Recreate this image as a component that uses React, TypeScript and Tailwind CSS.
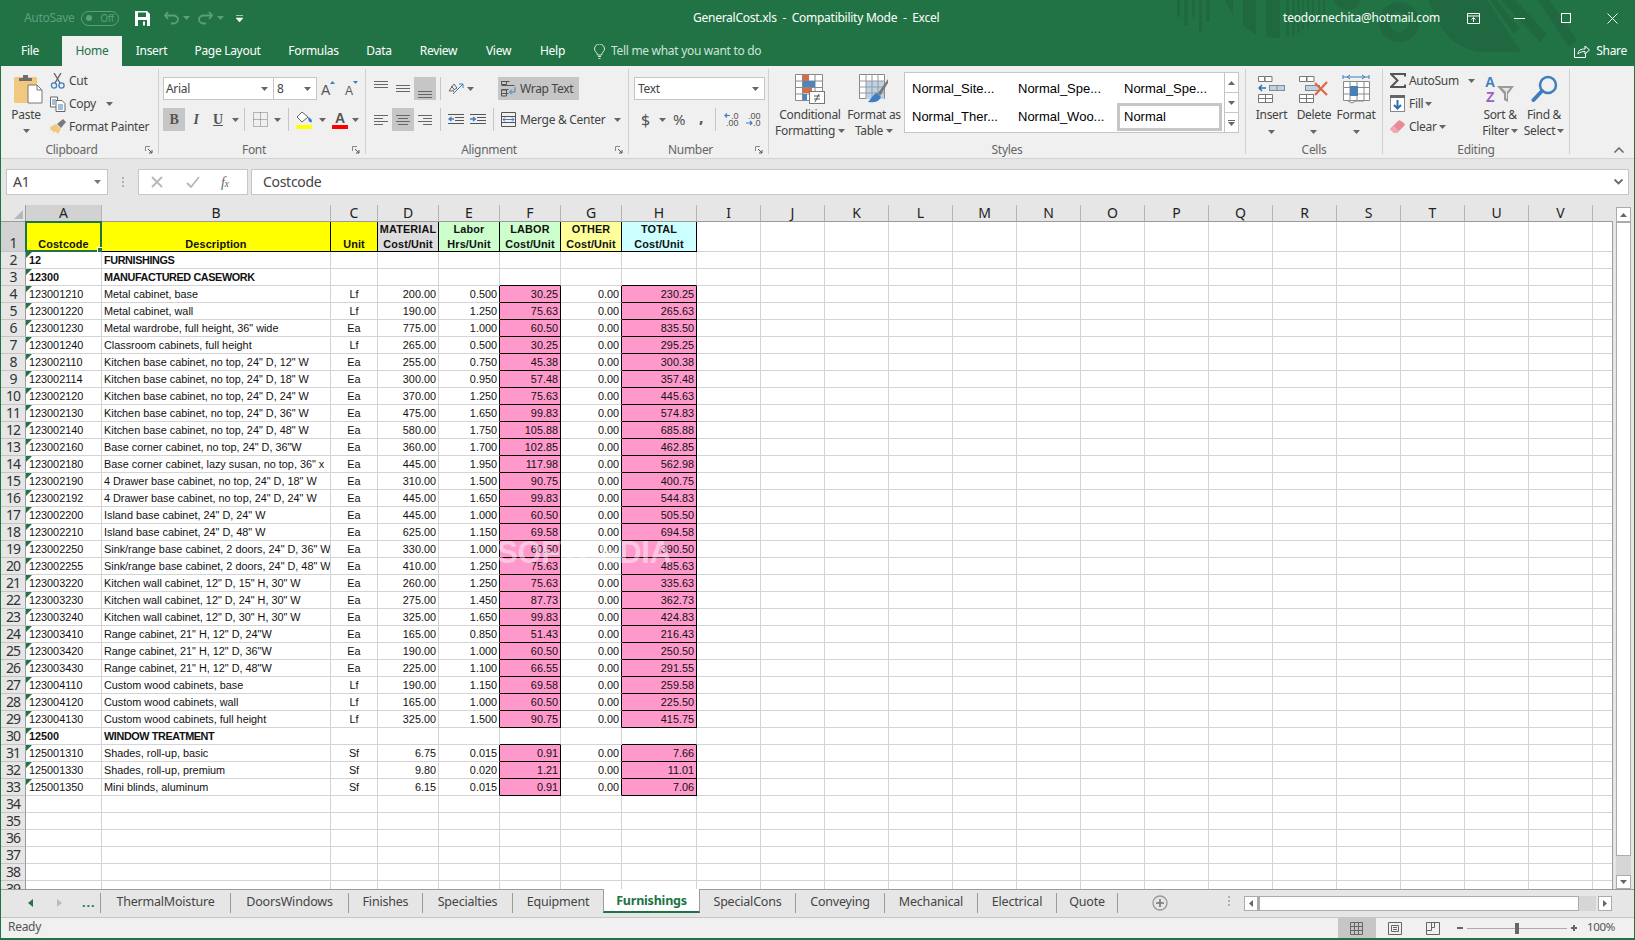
import React from 'react';

type RowD = [string, string, string?, string?, string?, string?, string?, string?];
const kb = 'Kitchen base cabinet, no top, 24" D, ';
const rows: RowD[] = [
  ['12', 'FURNISHINGS'],
  ['12300', 'MANUFACTURED CASEWORK'],
  ['123001210', 'Metal cabinet, base', 'Lf', '200.00', '0.500', '30.25', '0.00', '230.25'],
  ['123001220', 'Metal cabinet, wall', 'Lf', '190.00', '1.250', '75.63', '0.00', '265.63'],
  ['123001230', 'Metal wardrobe, full height, 36" wide', 'Ea', '775.00', '1.000', '60.50', '0.00', '835.50'],
  ['123001240', 'Classroom cabinets, full height', 'Lf', '265.00', '0.500', '30.25', '0.00', '295.25'],
  ['123002110', kb + '12" W', 'Ea', '255.00', '0.750', '45.38', '0.00', '300.38'],
  ['123002114', kb + '18" W', 'Ea', '300.00', '0.950', '57.48', '0.00', '357.48'],
  ['123002120', kb + '24" W', 'Ea', '370.00', '1.250', '75.63', '0.00', '445.63'],
  ['123002130', kb + '36" W', 'Ea', '475.00', '1.650', '99.83', '0.00', '574.83'],
  ['123002140', kb + '48" W', 'Ea', '580.00', '1.750', '105.88', '0.00', '685.88'],
  ['123002160', 'Base corner cabinet, no top, 24" D, 36"W', 'Ea', '360.00', '1.700', '102.85', '0.00', '462.85'],
  ['123002180', 'Base corner cabinet, lazy susan, no top, 36" x', 'Ea', '445.00', '1.950', '117.98', '0.00', '562.98'],
  ['123002190', '4 Drawer base cabinet, no top, 24" D, 18" W', 'Ea', '310.00', '1.500', '90.75', '0.00', '400.75'],
  ['123002192', '4 Drawer base cabinet, no top, 24" D, 24" W', 'Ea', '445.00', '1.650', '99.83', '0.00', '544.83'],
  ['123002200', 'Island base cabinet, 24" D, 24" W', 'Ea', '445.00', '1.000', '60.50', '0.00', '505.50'],
  ['123002210', 'Island base cabinet, 24" D, 48" W', 'Ea', '625.00', '1.150', '69.58', '0.00', '694.58'],
  ['123002250', 'Sink/range base cabinet, 2 doors, 24" D, 36" W', 'Ea', '330.00', '1.000', '60.50', '0.00', '390.50'],
  ['123002255', 'Sink/range base cabinet, 2 doors, 24" D, 48" W', 'Ea', '410.00', '1.250', '75.63', '0.00', '485.63'],
  ['123003220', 'Kitchen wall cabinet, 12" D, 15" H, 30" W', 'Ea', '260.00', '1.250', '75.63', '0.00', '335.63'],
  ['123003230', 'Kitchen wall cabinet, 12" D, 24" H, 30" W', 'Ea', '275.00', '1.450', '87.73', '0.00', '362.73'],
  ['123003240', 'Kitchen wall cabinet, 12" D, 30" H, 30" W', 'Ea', '325.00', '1.650', '99.83', '0.00', '424.83'],
  ['123003410', 'Range cabinet, 21" H, 12" D, 24"W', 'Ea', '165.00', '0.850', '51.43', '0.00', '216.43'],
  ['123003420', 'Range cabinet, 21" H, 12" D, 36"W', 'Ea', '190.00', '1.000', '60.50', '0.00', '250.50'],
  ['123003430', 'Range cabinet, 21" H, 12" D, 48"W', 'Ea', '225.00', '1.100', '66.55', '0.00', '291.55'],
  ['123004110', 'Custom wood cabinets, base', 'Lf', '190.00', '1.150', '69.58', '0.00', '259.58'],
  ['123004120', 'Custom wood cabinets, wall', 'Lf', '165.00', '1.000', '60.50', '0.00', '225.50'],
  ['123004130', 'Custom wood cabinets, full height', 'Lf', '325.00', '1.500', '90.75', '0.00', '415.75'],
  ['12500', 'WINDOW TREATMENT'],
  ['125001310', 'Shades, roll-up, basic', 'Sf', '6.75', '0.015', '0.91', '0.00', '7.66'],
  ['125001330', 'Shades, roll-up, premium', 'Sf', '9.80', '0.020', '1.21', '0.00', '11.01'],
  ['125001350', 'Mini blinds, aluminum', 'Sf', '6.15', '0.015', '0.91', '0.00', '7.06'],
];

const headW = 'w-[25px]';
const mainW = ['w-[76px]', 'w-[229px]', 'w-[47px]', 'w-[61px]', 'w-[61px]', 'w-[61px]', 'w-[61px]', 'w-[75px]'];
const extraLetters = ['I', 'J', 'K', 'L', 'M', 'N', 'O', 'P', 'Q', 'R', 'S', 'T', 'U', 'V'];

const Caret = ({ c = '#666' }: { c?: string }) => (
  <svg width="7" height="4" viewBox="0 0 7 4" className="shrink-0"><path d="M0 0h7L3.5 4z" fill={c} /></svg>
);

const Launcher = () => (
  <svg width="8" height="8" viewBox="0 0 8 8" className="absolute bottom-0 right-[5px]">
    <path d="M.5 5V.5H5" fill="none" stroke="#888" />
    <path d="M3 3l4 4M7 4v3H4" fill="none" stroke="#555" />
  </svg>
);

const Group = ({ w, label, launch, children }: { w: string; label: string; launch?: boolean; children: React.ReactNode }) => (
  <div className={`relative flex h-[85px] shrink-0 flex-col border-r border-[#d0d0d0] ${w}`}>
    <div className="flex h-[72px] shrink-0">{children}</div>
    <div className={`pt-[2px] text-center text-[12px] leading-[13px] text-[#666] ${launch ? 'pr-[16px]' : ''}`}>{label}</div>
    {launch && <Launcher />}
  </div>
);

const Lines = ({ rows: r }: { rows: [number, number, number][] }) => (
  <svg width="15" height="22" viewBox="0 0 15 22">
    {r.map(([y, x, l], i) => <rect key={i} x={x} y={y} width={l} height="1" fill="#666" />)}
  </svg>
);

const Sep = () => <div className="h-[23px] w-px shrink-0 bg-[#c6c6c6]" />;

function PasteIcon() {
  return (
    <svg width="30" height="30" viewBox="0 0 30 30">
      <rect x="1" y="3" width="23" height="26" rx="1" fill="#f0c97e" />
      <path d="M6 4h4V1h5v3h4v3H6z" fill="#6e6e6e" />
      <path d="M15 11h9l5 5v13H15z" fill="#fff" stroke="#777" />
      <path d="M24 11v5h5" fill="none" stroke="#777" />
    </svg>
  );
}
const CutIcon = () => (
  <svg width="16" height="16" viewBox="0 0 16 16">
    <path d="M4 0l6 10M11 0L5 10" stroke="#666" strokeWidth="1.4" fill="none" />
    <circle cx="4" cy="12.5" r="2.6" fill="none" stroke="#3f7fbf" strokeWidth="1.3" />
    <circle cx="11.5" cy="12.5" r="2.6" fill="none" stroke="#3f7fbf" strokeWidth="1.3" />
  </svg>
);
const CopyIcon = () => (
  <svg width="16" height="16" viewBox="0 0 16 16">
    <path d="M.5 1h7v10h-7z" fill="#fff" stroke="#666" />
    <path d="M6 4.500h6l3 3v8H6z" fill="#fff" stroke="#666" />
    <path d="M2 4h4M2 6h3M2 8h3" stroke="#3f7fbf" />
    <path d="M8 9h5M8 11h5M8 13h5" stroke="#3f7fbf" />
  </svg>
);
const BrushIcon = () => (
  <svg width="17" height="15" viewBox="0 0 17 15">
    <path d="M0 8l6-3 5 5-3 5-3-3-1 2-2-3-1 1z" fill="#f0c97e" />
    <path d="M7 5l6-5 3 3-5 6z" fill="#7a7a7a" />
  </svg>
);
const BordersIcon = () => (
  <svg width="15" height="15" viewBox="0 0 15 15">
    <path d="M.5.500h14v14H.5zM7.500.5v14M.5 7.500h14" stroke="#777" fill="none" strokeDasharray="1 1" />
  </svg>
);
const FillIcon = () => (
  <svg width="17" height="18" viewBox="0 0 17 18">
    <path d="M6 1L1 6l5 5 6-5z" fill="#fff" stroke="#666" />
    <path d="M12 6c2 1 4 2 4 4 0 1-1 2-2 1-1 0-2-2-2-5z" fill="#3f7fbf" />
    <rect y="14" width="16" height="4" fill="#ffff00" />
  </svg>
);
const FontColorIcon = () => (
  <svg width="16" height="18" viewBox="0 0 16 18" className="overflow-visible">
    <text x="8" y="12" textAnchor="middle" fontSize="14" fontWeight="700" fontFamily="Liberation Sans" fill="#555">A</text>
    <rect y="14" width="16" height="4" fill="#ff0000" />
  </svg>
);
const OrientIcon = () => (
  <svg width="16" height="14" viewBox="0 0 16 14">
    <path d="M1 9l5-7 3 4-5 3z" fill="none" stroke="#666" />
    <path d="M5 12L15 2M15 2h-4M15 2v4" stroke="#3f7fbf" fill="none" />
    <path d="M3 4l3 3M5 9l2 2" stroke="#666" fill="none" />
  </svg>
);
const WrapIcon = () => (
  <svg width="16" height="16" viewBox="0 0 16 16">
    <path d="M.5.500h8M.5 4.500h13M.5 8.500h7M.5 12.500h7" stroke="#555" fill="none" />
    <path d="M.5.500h5v3h-5zM.5 9h5v6h-5z" stroke="#555" fill="none" />
    <path d="M9 11h5V6" stroke="#3f7fbf" fill="none" />
    <path d="M11 8.500L8.500 11l2.500 2.500" stroke="#3f7fbf" fill="none" />
  </svg>
);
const MergeIcon = () => (
  <svg width="15" height="15" viewBox="0 0 15 15">
    <path d="M.5.500h14v14H.5zM.5 4.500h14M.5 10.500h14" stroke="#555" fill="none" />
    <path d="M2 7.500h11M4 5.500l-2 2 2 2M11 5.500l2 2-2 2" stroke="#3f7fbf" fill="none" />
  </svg>
);
const IndentIcon = ({ inc }: { inc?: boolean }) => (
  <svg width="16" height="12" viewBox="0 0 16 12">
    <path d="M0 .5h16M7 3.500h9M7 6.500h9M0 9.500h16" stroke="#555" fill="none" />
    {inc
      ? <path d="M0 5h5M3 3l2.500 2L3 7" stroke="#3f7fbf" strokeWidth="1.300" fill="none" />
      : <path d="M6 5H1M3.500 3L1 5l2.500 2" stroke="#3f7fbf" strokeWidth="1.300" fill="none" />}
  </svg>
);
const DecIcon = ({ inc }: { inc?: boolean }) => (
  <svg width="15" height="15" viewBox="0 0 15 15" fontFamily="Liberation Sans" fontSize="9" fill="#555" letterSpacing="0">
    {inc ? (
      <>
        <path d="M1 3.500h5M3 1.500l-2 2 2 2" stroke="#3f7fbf" strokeWidth="1.200" fill="none" />
        <text x="7" y="7">.0</text>
        <text x="2" y="14">.00</text>
      </>
    ) : (
      <>
        <text x="2" y="7">.00</text>
        <path d="M0 11h6M4 9l2 2-2 2" stroke="#3f7fbf" strokeWidth="1.200" fill="none" />
        <text x="7" y="14">.0</text>
      </>
    )}
  </svg>
);
const CondIcon = () => (
  <svg width="30" height="30" viewBox="0 0 30 30">
    <path d="M.5.500h27v26H.5zM7.500.5v26M.5 7h27M.5 13.500h27M.5 20h27M20 .5v26" fill="#fff" stroke="#8a8a8a" />
    <rect x="8" y="1" width="6" height="6" fill="#dd6a43" />
    <rect x="8" y="7" width="12" height="6" fill="#4a86c0" />
    <rect x="8" y="14" width="9" height="5" fill="#dd6a43" />
    <rect x="8" y="20" width="4" height="6" fill="#4a86c0" />
    <rect x="14.500" y="17.500" width="15" height="12" fill="#fff" stroke="#777" />
    <path d="M19 22h6M19 25h6M24 20l-4 8" stroke="#555" fill="none" />
  </svg>
);
const TableIcon = () => (
  <svg width="30" height="30" viewBox="0 0 30 30">
    <path d="M.5.500h25v24H.5z" fill="#fff" stroke="#8a8a8a" />
    <rect x="7" y="7" width="18" height="18" fill="#bcd2e8" />
    <path d="M.5 7h25M.5 13h25M.5 19h25M7 .5v24M13 .5v24M19 .5v24" stroke="#9a9a9a" fill="none" />
    <path d="M29 5l-10 14 2 3 8-13z" fill="#7a7a7a" />
    <path d="M18 19c-4 1-5 5-9 9 5 1 11 0 13-5z" fill="#3f7fbf" />
  </svg>
);
const InsertIcon = () => (
  <svg width="27" height="27" viewBox="0 0 27 27">
    <path d="M.5.500h6v5h-6zM7 .5h7v5H7zM.5 18.500h14v8H.5zM7.500 18.500v8M.5 22.500h14" fill="#fff" stroke="#777" />
    <rect x="11.500" y="9.500" width="15" height="5" fill="#bcd2e8" stroke="#888" />
    <path d="M19 9.500v5" stroke="#888" />
    <path d="M8 12H1M4 9l-3 3 3 3" stroke="#2f6fb0" strokeWidth="1.500" fill="none" />
  </svg>
);
const DeleteIcon = () => (
  <svg width="30" height="27" viewBox="0 0 30 27">
    <path d="M.5.500h7v5h-7zM8 .5h7v5H8zM.5 18.500h14v8H.5zM7.500 18.500v8M.5 22.500h14" fill="#fff" stroke="#777" />
    <rect x="6.500" y="9.500" width="14" height="5" fill="#bcd2e8" stroke="#888" />
    <path d="M16 7l12 12M28 6L16 19" stroke="#dd6a43" strokeWidth="2.200" fill="none" />
  </svg>
);
const FormatIcon = () => (
  <svg width="29" height="30" viewBox="0 0 29 30">
    <path d="M1 3h26M1 1v4M27 1v4M5 3l3-2M5 3l3 2M23 3l-3-2M23 3l-3 2" stroke="#3f7fbf" fill="none" />
    <path d="M1.500 7.500h26v19h-26zM1.500 13.500h26M1.500 20h26M8 7.500v19M15 7.500v19M22 7.500v19" fill="#fff" stroke="#8a8a8a" />
    <rect x="8" y="12" width="8" height="10" fill="#4a7fb5" />
    <path d="M6 27l4 2 4-2 8 0" stroke="#8a8a8a" fill="none" />
  </svg>
);
const SigmaIcon = () => (
  <svg width="16" height="15" viewBox="0 0 16 15">
    <path d="M15 3.500V1H1l6.500 6.500L1 14h14v-2.500" stroke="#555" strokeWidth="2" fill="none" />
  </svg>
);
const FillDown = () => (
  <svg width="15" height="17" viewBox="0 0 15 17">
    <rect x=".5" y=".5" width="14" height="16" fill="#fff" stroke="#888" />
    <rect x="0" y="0" width="15" height="3" fill="#666" />
    <path d="M7.500 5v8M4 10l3.500 3.500L11 10" stroke="#2f6fb0" strokeWidth="2" fill="none" />
  </svg>
);
const Eraser = () => (
  <svg width="15" height="14" viewBox="0 0 15 14">
    <path d="M0 9l8-8c1-1 2-1 3 0l3 2c1 1 1 2 0 3l-7 7H4z" fill="#e88a9a" />
    <path d="M0 9l4 4h3l2-2-5-5z" fill="#f0a8b4" />
  </svg>
);
const SortIcon = () => (
  <svg width="30" height="28" viewBox="0 0 30 28" fontFamily="Liberation Sans" fontWeight="700" fontSize="14" letterSpacing="0" className="overflow-visible">
    <text x="0" y="12" fill="#3f7fbf">A</text>
    <text x="1" y="27" fill="#9b5fc0">Z</text>
    <path d="M12 11h17l-6 8v8l-4-2v-6z" fill="#9a9a9a" />
    <path d="M17 13h8l-3 4v7l-1-1v-6z" fill="#e6e6e6" />
  </svg>
);
const FindIcon = () => (
  <svg width="27" height="28" viewBox="0 0 27 28">
    <circle cx="17" cy="10" r="8" fill="none" stroke="#3f7fbf" strokeWidth="2.500" />
    <path d="M11 16L2.500 25" stroke="#3f7fbf" strokeWidth="4" strokeLinecap="round" />
  </svg>
);

const Stack = ({ children, icon, w }: { children: React.ReactNode; icon: React.ReactNode; w: string }) => (
  <div className={`flex shrink-0 flex-col items-center whitespace-nowrap text-[12px] leading-[16px] text-[#444] ${w}`}>
    <div className="mt-[5px] flex h-[30px] items-center">{icon}</div>
    <div className="mt-[3px] flex flex-col items-center">{children}</div>
  </div>
);

function TitleBar() {
  return (
    <div className="relative flex h-[36px] items-center text-[12px] text-white">
      <div className="flex w-[692px] items-center">
        <span className="ml-[23px] w-[57px] text-[#5f9e7d]">AutoSave</span>
        <div className="flex h-[15px] w-[38px] items-center justify-between rounded-full border border-[#5f9e7d] px-[4px] text-[10px] text-[#5f9e7d]">
          <span className="h-[6px] w-[6px] rounded-full bg-[#5f9e7d]" />
          <span>Off</span>
        </div>
        <svg width="15" height="15" viewBox="0 0 15 15" className="ml-[16px]">
          <path d="M0 0h12l3 3v12H0z" fill="#fff" />
          <rect x="3" y="1.500" width="8" height="4.500" fill="#217346" />
          <rect x="3" y="9" width="9" height="6" fill="#217346" />
          <rect x="8" y="10.500" width="2" height="4" fill="#fff" />
        </svg>
        <svg width="15" height="14" viewBox="0 0 15 14" className="ml-[14px]">
          <path d="M4 1L1 4.500 4 8M1 4.500h8c3 0 5 2 5 4s-2 4-5 4H7" fill="none" stroke="#5f9e7d" strokeWidth="1.800" />
        </svg>
        <span className="ml-[4px]"><Caret c="#5f9e7d" /></span>
        <svg width="15" height="14" viewBox="0 0 15 14" className="ml-[8px]">
          <path d="M11 1l3 3.500L11 8M14 4.500H6c-3 0-5 2-5 4s2 4 5 4h2" fill="none" stroke="#5f9e7d" strokeWidth="1.800" />
        </svg>
        <span className="ml-[4px]"><Caret c="#5f9e7d" /></span>
        <svg width="7" height="7" viewBox="0 0 7 7" className="ml-[12px]">
          <path d="M0 .5h7M0 3h7L3.500 7z" fill="#fff" stroke="#fff" strokeWidth=".6" />
        </svg>
      </div>
      <span className="w-[590px] whitespace-pre tracking-[-0.26px]">GeneralCost.xls  -  Compatibility Mode  -  Excel</span>
      <span className="w-[184px] tracking-[-0.2px]">teodor.nechita@hotmail.com</span>
      <svg width="13" height="11" viewBox="0 0 13 11"><path d="M.5.500h12v10H.5zM.5 3h12M6.500 9V4.500M4.500 6.500l2-2 2 2" fill="none" stroke="#fff" /></svg>
      <svg width="11" height="1" viewBox="0 0 11 1" className="ml-[34px]"><rect width="11" height="1" fill="#fff" /></svg>
      <svg width="10" height="10" viewBox="0 0 10 10" className="ml-[36px]"><rect x=".5" y=".5" width="9" height="9" fill="none" stroke="#fff" /></svg>
      <svg width="11" height="11" viewBox="0 0 11 11" className="ml-[36px]"><path d="M.5.500l10 10M10.500.5l-10 10" stroke="#fff" /></svg>
    </div>
  );
}

function TabsBar() {
  return (
    <div className="relative flex h-[30px] items-center text-[12px] text-white">
      <div className="flex h-full w-[61px] items-center justify-center pr-[3px]">File</div>
      <div className="flex h-full w-[60px] items-center justify-center bg-[#f0f0f0] text-[#217346]">Home</div>
      <div className="flex h-full w-[59px] items-center justify-center">Insert</div>
      <div className="flex h-full w-[93px] items-center justify-center">Page Layout</div>
      <div className="flex h-full w-[79px] items-center justify-center">Formulas</div>
      <div className="flex h-full w-[52px] items-center justify-center">Data</div>
      <div className="flex h-full w-[67px] items-center justify-center">Review</div>
      <div className="flex h-full w-[53px] items-center justify-center">View</div>
      <div className="flex h-full w-[55px] items-center justify-center">Help</div>
      <svg width="11" height="15" viewBox="0 0 11 15" className="ml-[14px]">
        <path d="M3.500 11C3 8 .5 7.500.5 5a5 5 0 0 1 10 0c0 2.500-2.500 3-3 6zM4 12.500h3M4.500 14.500h2" fill="none" stroke="#d8e8de" />
      </svg>
      <span className="ml-[6px] text-[#cfe3d7]">Tell me what you want to do</span>
      <div className="ml-auto flex items-center pr-[7px]">
        <svg width="16" height="14" viewBox="0 0 16 14" className="mr-[6px]">
          <path d="M.5 4v9.500h11V10M4 10c0-4 3-5 7-5V2l4.500 4-4.500 4V7.500C8 7.500 6 8 4 10z" fill="none" stroke="#fff" />
        </svg>
        <span>Share</span>
      </div>
    </div>
  );
}

function Pattern() {
  return (
    <svg width="1635" height="66" viewBox="0 0 1635 66" className="pointer-events-none absolute left-0 top-0">
      <g fill="#1f6840">
        <rect x="1176" width="3" height="17" /><rect x="1183" width="4" height="25" /><rect x="1191" width="3" height="17" />
        <rect x="1198" width="3" height="33" /><rect x="1205" width="4" height="22" />
        <path d="M1224 0h8v15z" /><path d="M1242 0h13v35l-13-10z" /><path d="M1265 0h14v38l-14-1z" />
        <rect x="1285" width="3" height="37" /><rect x="1291" width="3" height="36" /><rect x="1296" width="3" height="33" />
        <rect x="1301" width="2" height="30" /><rect x="1306" width="2" height="28" /><rect x="1311" width="2" height="24" />
        <rect x="1317" width="2" height="20" /><rect x="1322" width="2" height="15" />
        <path d="M1333 0h27c-2 6-7 10-13 10s-12-4-14-10z" />
        <path fillRule="evenodd" d="M1398 2a20 20 0 1 0 .01 0zM1398 12a10 10 0 1 1-.01 0z" />
        <path d="M1428 0c8 30 28 52 56 52h36l-34-52z" />
        <path d="M1500 0h14l32 34-7 8zM1537 0h11l28 40-8 7z" />
        <path d="M1489 0h7l22 28-5 6z" />
      </g>
    </svg>
  );
}

function ClipboardGroup() {
  return (
    <Group w="w-[158px]" label="Clipboard" launch>
      <div className="ml-[5px] flex w-[40px] shrink-0 flex-col items-center text-[12px] leading-[16px] text-[#444]">
        <div className="ml-[4px] mt-[5px]"><PasteIcon /></div>
        <div className="mt-[3px]">Paste</div>
        <div className="mt-[6px]"><Caret /></div>
      </div>
      <div className="ml-[4px] flex flex-col whitespace-nowrap text-[12px] text-[#444]">
        <div className="flex h-[23px] items-center"><span className="flex w-[19px] shrink-0"><CutIcon /></span>Cut</div>
        <div className="flex h-[23px] items-center"><span className="flex w-[19px] shrink-0"><CopyIcon /></span>Copy<span className="ml-[10px]"><Caret /></span></div>
        <div className="flex h-[23px] items-center"><span className="flex w-[19px] shrink-0"><BrushIcon /></span>Format Painter</div>
      </div>
    </Group>
  );
}

function FontGroup() {
  return (
    <Group w="w-[207px]" label="Font" launch>
      <div className="ml-[4px] mt-[8px] flex flex-col">
        <div className="flex h-[23px] items-center text-[12px] text-[#444]">
          <div className="flex h-full w-[111px] items-center justify-between border border-[#c6c6c6] bg-white pl-[2px] pr-[5px]">Arial<Caret /></div>
          <div className="flex h-full w-[43px] items-center justify-between border border-l-0 border-[#c6c6c6] bg-white pl-[3px] pr-[5px]">8<Caret /></div>
          <svg width="16" height="15" viewBox="0 0 16 15" className="ml-[4px] overflow-visible" fontFamily="Liberation Sans" fontSize="14" fill="#555" letterSpacing="0"><text x="0" y="14">A</text><path d="M9 3l2.500-3L14 3z" fill="#3f7fbf" /></svg>
          <svg width="16" height="15" viewBox="0 0 16 15" className="ml-[8px] overflow-visible" fontFamily="Liberation Sans" fontSize="12" fill="#555" letterSpacing="0"><text x="0" y="14">A</text><path d="M8 0h5l-2.500 3z" fill="#3f7fbf" /></svg>
        </div>
        <div className="mt-[8px] flex h-[23px] items-center text-[14px] text-[#555]">
          <div className="flex h-full w-[22px] items-center justify-center bg-[#c6c6c6] font-['Liberation_Serif',serif] font-bold">B</div>
          <div className="flex h-full w-[22px] items-center justify-center font-['Liberation_Serif',serif] font-bold italic">I</div>
          <div className="flex h-full w-[22px] items-center justify-center font-['Liberation_Serif',serif] font-bold underline">U</div>
          <span className="ml-[3px]"><Caret /></span>
          <span className="ml-[5px]"><Sep /></span>
          <span className="ml-[8px] flex"><BordersIcon /></span>
          <span className="ml-[6px]"><Caret /></span>
          <span className="ml-[7px]"><Sep /></span>
          <span className="ml-[7px] flex"><FillIcon /></span>
          <span className="ml-[6px]"><Caret /></span>
          <span className="ml-[6px] flex"><FontColorIcon /></span>
          <span className="ml-[4px]"><Caret /></span>
        </div>
      </div>
    </Group>
  );
}

const AlignBtn = ({ on, l }: { on?: boolean; l: [number, number, number][] }) => (
  <div className={`flex h-[23px] w-[22px] shrink-0 items-center justify-center ${on ? 'bg-[#c6c6c6]' : ''}`}><Lines rows={l} /></div>
);

function AlignGroup() {
  return (
    <Group w="w-[263px]" label="Alignment" launch>
      <div className="ml-[4px] mt-[8px] flex flex-col whitespace-nowrap text-[12px] text-[#444]">
        <div className="flex h-[23px] items-center">
          <AlignBtn l={[[3, 0, 14], [6, 0, 14], [9, 0, 14]]} />
          <AlignBtn l={[[7, 0, 14], [10, 0, 14], [13, 0, 14]]} />
          <AlignBtn on l={[[13, 0, 14], [16, 0, 14], [19, 0, 14]]} />
          <span className="ml-[4px]"><Sep /></span>
          <span className="ml-[7px] flex"><OrientIcon /></span>
          <span className="ml-[3px]"><Caret /></span>
          <div className="ml-[24px] flex h-full w-[81px] items-center bg-[#c6c6c6] pl-[3px]">
            <span className="mr-[3px] flex"><WrapIcon /></span>Wrap Text
          </div>
        </div>
        <div className="mt-[8px] flex h-[23px] items-center">
          <AlignBtn l={[[6, 0, 14], [9, 0, 9], [12, 0, 14], [15, 0, 9]]} />
          <AlignBtn on l={[[6, 0, 14], [9, 2, 10], [12, 0, 14], [15, 2, 10]]} />
          <AlignBtn l={[[6, 0, 14], [9, 5, 9], [12, 0, 14], [15, 5, 9]]} />
          <span className="ml-[4px]"><Sep /></span>
          <span className="ml-[7px] flex"><IndentIcon /></span>
          <span className="ml-[6px] flex"><IndentIcon inc /></span>
          <span className="ml-[7px]"><Sep /></span>
          <span className="ml-[7px] mr-[4px] flex"><MergeIcon /></span>
          Merge &amp; Center
          <span className="ml-[9px]"><Caret /></span>
        </div>
      </div>
    </Group>
  );
}

function NumberGroup() {
  return (
    <Group w="w-[140px]" label="Number" launch>
      <div className="ml-[5px] mt-[8px] flex flex-col text-[#444]">
        <div className="flex h-[23px] w-[131px] items-center justify-between border border-[#c6c6c6] bg-white pl-[3px] pr-[5px] text-[12px]">Text<Caret /></div>
        <div className="mt-[8px] flex h-[23px] items-center text-[16px] text-[#555]">
          <span className="ml-[7px] w-[10px]">$</span>
          <span className="ml-[8px]"><Caret /></span>
          <span className="ml-[7px] w-[15px] text-[15px]">%</span>
          <span className="-mt-[6px] ml-[11px] w-[5px] font-bold">,</span>
          <span className="ml-[11px]"><Sep /></span>
          <span className="ml-[8px] flex"><DecIcon inc /></span>
          <span className="ml-[7px] flex"><DecIcon /></span>
        </div>
      </div>
    </Group>
  );
}

function StylesGroup() {
  const cell = "flex h-[28px] w-[102px] items-center pl-[7px]";
  return (
    <Group w="w-[477px]" label="Styles">
      <Stack w="ml-[5px] w-[72px]" icon={<CondIcon />}>
        <span>Conditional</span>
        <span className="flex items-center gap-[3px]">Formatting <Caret /></span>
      </Stack>
      <Stack w="w-[56px]" icon={<TableIcon />}>
        <span>Format as</span>
        <span className="flex items-center gap-[3px]">Table <Caret /></span>
      </Stack>
      <div className="ml-[2px] mt-[3px] flex h-[61px] w-[335px] border border-[#c6c6c6] bg-white font-['Liberation_Sans',sans-serif] text-[13px] tracking-normal text-black">
        <div className="grid flex-1 grid-cols-[106px_106px_106px] content-center">
          <div className={cell}>Normal_Site...</div>
          <div className={cell}>Normal_Spe...</div>
          <div className={cell}>Normal_Spe...</div>
          <div className={cell}>Normal_Ther...</div>
          <div className={cell}>Normal_Woo...</div>
          <div className="flex h-[28px] w-[105px] items-center border-[3px] border-[#c6c6c6] pl-[4px]">Normal</div>
        </div>
        <div className="flex w-[14px] flex-col border-l border-[#c6c6c6]">
          <div className="flex h-[20px] items-center justify-center border-b border-[#c6c6c6]"><svg width="7" height="4" viewBox="0 0 7 4"><path d="M0 4h7L3.500 0z" fill="#666" /></svg></div>
          <div className="flex h-[20px] items-center justify-center border-b border-[#c6c6c6]"><Caret /></div>
          <div className="flex flex-1 flex-col items-center justify-center gap-[1px]"><span className="h-px w-[7px] bg-[#666]" /><Caret /></div>
        </div>
      </div>
    </Group>
  );
}

function CellsGroup() {
  return (
    <Group w="w-[137px]" label="Cells">
      <Stack w="ml-[4px] w-[43px]" icon={<InsertIcon />}><span>Insert</span><span className="mt-[7px]"><Caret /></span></Stack>
      <Stack w="w-[42px]" icon={<DeleteIcon />}><span>Delete</span><span className="mt-[7px]"><Caret /></span></Stack>
      <Stack w="w-[42px]" icon={<FormatIcon />}><span>Format</span><span className="mt-[7px]"><Caret /></span></Stack>
    </Group>
  );
}

function EditingGroup() {
  return (
    <Group w="w-[187px]" label="Editing">
      <div className="ml-[7px] flex w-[88px] shrink-0 flex-col whitespace-nowrap text-[12px] text-[#444]">
        <div className="flex h-[23px] items-center"><span className="flex w-[19px] shrink-0"><SigmaIcon /></span>AutoSum<span className="ml-[9px]"><Caret /></span></div>
        <div className="flex h-[23px] items-center"><span className="flex w-[19px] shrink-0"><FillDown /></span>Fill<span className="ml-[2px]"><Caret /></span></div>
        <div className="flex h-[23px] items-center"><span className="flex w-[19px] shrink-0"><Eraser /></span>Clear<span className="ml-[2px]"><Caret /></span></div>
      </div>
      <Stack w="w-[44px]" icon={<SortIcon />}>
        <span>Sort &amp;</span>
        <span className="flex items-center gap-[2px]">Filter <Caret /></span>
      </Stack>
      <Stack w="w-[44px]" icon={<FindIcon />}>
        <span>Find &amp;</span>
        <span className="flex items-center gap-[2px]">Select <Caret /></span>
      </Stack>
    </Group>
  );
}

function Ribbon() {
  return (
    <div className="relative flex h-[93px] border-b border-[#d2d2d2] bg-[#f0f0f0] pt-[3px]">
      <ClipboardGroup /><FontGroup /><AlignGroup /><NumberGroup /><StylesGroup /><CellsGroup /><EditingGroup />
      <svg width="10" height="6" viewBox="0 0 10 6" className="ml-auto mr-[10px] mt-[78px]"><path d="M.5 5.500L5 1l4.500 4.500" fill="none" stroke="#666" strokeWidth="1.500" /></svg>
    </div>
  );
}

function FormulaBar() {
  return (
    <div className="flex h-[46px] items-start bg-[#e6e6e6] pt-[10px] text-[14px] text-[#444]">
      <div className="ml-[5px] flex h-[26px] w-[102px] items-center justify-between border border-[#c6c6c6] bg-white pb-[1px] pl-[6px] pr-[6px]">A1<Caret c="#777" /></div>
      <div className="ml-[14px] flex h-[26px] flex-col justify-center gap-[2px]">
        <span className="h-[2px] w-[2px] bg-[#b0b0b0]" /><span className="h-[2px] w-[2px] bg-[#b0b0b0]" /><span className="h-[2px] w-[2px] bg-[#b0b0b0]" />
      </div>
      <div className="ml-[14px] flex h-[26px] w-[110px] items-center border border-[#c6c6c6] bg-white">
        <svg width="12" height="12" viewBox="0 0 12 12" className="ml-[12px]"><path d="M1 1l10 10M11 1L1 11" stroke="#b8b8b8" strokeWidth="1.800" /></svg>
        <svg width="14" height="12" viewBox="0 0 14 12" className="ml-[23px]"><path d="M1 7l4 4L13 1" stroke="#b8b8b8" strokeWidth="1.800" fill="none" /></svg>
        <span className="ml-[21px] font-['Liberation_Serif',serif] text-[14px] italic text-[#666]">f<span className="text-[10px]">x</span></span>
      </div>
      <div className="ml-[3px] flex h-[26px] w-[1378px] items-center justify-between border border-[#c6c6c6] bg-white pb-[1px] pl-[11px] pr-[5px]">
        Costcode
        <svg width="9" height="6" viewBox="0 0 9 6"><path d="M.5.500L4.500 4.500 8.500.5" stroke="#666" strokeWidth="1.800" fill="none" /></svg>
      </div>
    </div>
  );
}

function ColHeaders() {
  const letters = ['A', 'B', 'C', 'D', 'E', 'F', 'G', 'H'];
  return (
    <div className="flex h-[17px] font-['Noto_Sans',sans-serif] text-[14px] leading-[16px] text-[#222]">
      <div className={`${headW} flex shrink-0 items-end justify-end border-b border-r border-[#9b9b9b] bg-[#e6e6e6] pb-[2px] pr-[2px]`}>
        <svg width="9" height="9" viewBox="0 0 9 9"><path d="M9 0v9H0z" fill="#b8b8b8" /></svg>
      </div>
      {letters.map((l, i) => (
        <div key={l} className={`${mainW[i]} flex shrink-0 items-center justify-center border-b border-r border-b-[#9b9b9b] border-r-[#b4b4b4] ${i === 0 ? 'bg-[#d2d2d2]' : 'bg-[#e6e6e6]'}`}>{l}</div>
      ))}
      {extraLetters.map((l) => (
        <div key={l} className="flex w-[64px] shrink-0 items-center justify-center border-b border-r border-b-[#9b9b9b] border-r-[#b4b4b4] bg-[#e6e6e6]">{l}</div>
      ))}
      <div className="w-[20px] shrink-0 border-b border-[#9b9b9b] bg-[#e6e6e6]" />
    </div>
  );
}

const RowNum = ({ n, on, tall }: { n: number; on?: boolean; tall?: boolean }) => (
  <div className={`${headW} flex shrink-0 justify-center border-b border-r border-b-[#c4c4c4] border-r-[#9b9b9b] font-['Noto_Sans',sans-serif] text-[14px] tracking-[-1px] text-[#333] ${tall ? 'items-end leading-[17px]' : 'items-center leading-[16px]'} ${on ? 'bg-[#d2d2d2]' : 'bg-[#e6e6e6]'}`}>{n}</div>
);

const ExtraCells = () => (
  <>
    {extraLetters.map((l) => <div key={l} className="w-[64px] shrink-0 border-b border-r border-[#d4d4d4]" />)}
    <div className="w-[20px] shrink-0 border-b border-[#d4d4d4]" />
  </>
);

function HeaderRow() {
  const cells: [string, string, string][] = [
    ['', 'Costcode', 'bg-[#ffff00] border-r-[#ffff00]'],
    ['', 'Description', 'bg-[#ffff00] border-r-black'],
    ['', 'Unit', 'bg-[#ffff00] border-r-black'],
    ['MATERIAL', 'Cost/Unit', 'bg-[#dddddd] border-r-black'],
    ['Labor', 'Hrs/Unit', 'bg-[#ccffcc] border-r-black'],
    ['LABOR', 'Cost/Unit', 'bg-[#ccffcc] border-r-black'],
    ['OTHER', 'Cost/Unit', 'bg-[#ffff99] border-r-black'],
    ['TOTAL', 'Cost/Unit', 'bg-[#ccffff] border-r-black'],
  ];
  return (
    <div className="flex h-[30px]">
      <RowNum n={1} on tall />
      {cells.map(([a, b, c], i) => (
        <div key={i} className={`relative flex shrink-0 flex-col items-center justify-end whitespace-nowrap border-b border-r border-b-black text-center font-bold leading-[15px] tracking-[0.15px] ${mainW[i]} ${c}`}>
          {a && <span>{a}</span>}
          <span className="-mb-[1px]">{b}</span>
          {i === 0 && (
            <div className="absolute -inset-[1px] border-2 border-[#217346]">
              <div className="absolute -bottom-[3px] -right-[3px] h-[6px] w-[6px] border border-white bg-[#217346]" />
            </div>
          )}
        </div>
      ))}
      <ExtraCells />
    </div>
  );
}

function DataRow({ d, n }: { d: RowD; n: number }) {
  const pinkNow = !!d[2];
  const next = rows[n - 1];
  const pinkBelow = !!(next && next[2]);
  const rb = (black: boolean) => (black ? 'border-r-black' : 'border-r-[#d4d4d4]');
  const bb = (black: boolean) => (black ? 'border-b-black' : 'border-b-[#d4d4d4]');
  const bold = !d[2] ? 'font-bold' : '';
  return (
    <div className="flex h-[17px] leading-[16px]">
      <RowNum n={n} />
      <div className={`relative flex w-[76px] shrink-0 items-center border-b border-r border-[#d4d4d4] pl-[3px] ${bold}`}>
        <span className="absolute left-0 top-0 h-0 w-0 border-r-[6px] border-t-[6px] border-r-transparent border-t-[#217346]" />
        {d[0]}
      </div>
      <div className={`flex w-[229px] shrink-0 items-center overflow-hidden whitespace-nowrap border-b border-r border-[#d4d4d4] pl-[2px] ${bold} ${!d[2] ? 'tracking-[-0.4px]' : ''}`}>{d[1]}</div>
      <div className="flex w-[47px] shrink-0 items-center justify-center border-b border-r border-[#d4d4d4]">{d[2]}</div>
      <div className="flex w-[61px] shrink-0 items-center justify-end border-b border-r border-[#d4d4d4] pr-[2px]">{d[3]}</div>
      <div className={`flex w-[61px] shrink-0 items-center justify-end border-b border-r border-b-[#d4d4d4] pr-[2px] ${rb(pinkNow)}`}>{d[4]}</div>
      <div className={`flex w-[61px] shrink-0 items-center justify-end border-b border-r pr-[2px] ${rb(pinkNow)} ${bb(pinkNow || pinkBelow)} ${pinkNow ? 'bg-[#ff99cc]' : ''}`}>{d[5]}</div>
      <div className={`flex w-[61px] shrink-0 items-center justify-end border-b border-r border-b-[#d4d4d4] pr-[2px] ${rb(pinkNow)}`}>{d[6]}</div>
      <div className={`flex w-[75px] shrink-0 items-center justify-end border-b border-r pr-[2px] ${rb(pinkNow)} ${bb(pinkNow || pinkBelow)} ${pinkNow ? 'bg-[#ff99cc]' : ''}`}>{d[7]}</div>
      <ExtraCells />
    </div>
  );
}

function EmptyRow({ n }: { n: number }) {
  const cells = mainW.map((w, i) => <div key={i} className={`${w} shrink-0 border-b border-r border-[#d4d4d4]`} />);
  return (
    <div className="flex h-[17px]">
      <RowNum n={n} />
      {cells}
      <ExtraCells />
    </div>
  );
}

function VScroll() {
  return (
    <div className="flex h-[684px] w-[21px] shrink-0 flex-col bg-[#e6e6e6] pl-[3px] pt-[2px]">
      <div className="flex h-[15px] w-[15px] items-center justify-center border border-[#ababab] bg-white"><svg width="7" height="4" viewBox="0 0 7 4"><path d="M0 4h7L3.500 0z" fill="#666" /></svg></div>
      <div className="h-[634px] w-[15px] border border-[#ababab] bg-white" />
      <div className="h-[19px] w-[15px] bg-[#d6d6d6]" />
      <div className="flex h-[14px] w-[15px] items-center justify-center border border-[#ababab] bg-white"><Caret /></div>
    </div>
  );
}

function Sheet() {
  const empties = [34, 35, 36, 37, 38, 39];
  return (
    <div className="flex h-[684px]">
      <div className="relative w-[1612px] shrink-0 border-r border-[#9b9b9b] bg-white font-['Liberation_Sans',sans-serif] text-[10.85px] tracking-normal text-[#111]">
        <ColHeaders />
        <div className="relative h-[667px] [clip-path:inset(-2px_0_0_0)]">
          <HeaderRow />
          {rows.map((d, i) => <DataRow key={i} d={d} n={i + 2} />)}
          {empties.map((n) => <EmptyRow key={n} n={n} />)}
          <div className="pointer-events-none absolute left-[496px] top-[314px] font-['Liberation_Sans',sans-serif] text-[31px] font-bold leading-[34px] tracking-[-0.3px] text-white/45">SOFTPEDIA</div>
        </div>
      </div>
      <VScroll />
    </div>
  );
}

function SheetTabs() {
  const tab = "flex h-[20px] shrink-0 items-center justify-center border-r border-[#9b9b9b] pb-[1px] text-[#444]";
  return (
    <div className="relative flex h-[28px] items-start border-t border-[#9b9b9b] bg-[#e6e6e6] pt-[3px] text-[12.5px] tracking-[-0.2px]">
      <div className="flex h-[20px] w-[100px] shrink-0 items-center border-r border-[#9b9b9b]">
        <svg width="5" height="8" viewBox="0 0 5 8" className="ml-[27px]"><path d="M5 0v8L0 4z" fill="#217346" /></svg>
        <svg width="5" height="8" viewBox="0 0 5 8" className="ml-[24px]"><path d="M0 0v8l5-4z" fill="#bbb" /></svg>
        <span className="ml-[20px] font-bold leading-[12px] tracking-[1px] text-[#217346]">...</span>
      </div>
      <div className={`${tab} w-[130px]`}>ThermalMoisture</div>
      <div className={`${tab} w-[118px]`}>DoorsWindows</div>
      <div className={`${tab} w-[74px]`}>Finishes</div>
      <div className={`${tab} w-[90px]`}>Specialties</div>
      <div className="flex h-[20px] w-[90px] shrink-0 items-center justify-center pb-[1px] text-[#444]">Equipment</div>
      <div className="-mt-[4px] flex h-[24px] w-[97px] shrink-0 items-center justify-center border-x border-b-2 border-x-[#9b9b9b] border-b-[#217346] bg-white pt-[2px] font-bold text-[#217346]">Furnishings</div>
      <div className={`${tab} w-[96px]`}>SpecialCons</div>
      <div className={`${tab} w-[89px]`}>Conveying</div>
      <div className={`${tab} w-[93px]`}>Mechanical</div>
      <div className={`${tab} w-[79px]`}>Electrical</div>
      <div className={`${tab} w-[61px]`}>Quote</div>
      <svg width="16" height="16" viewBox="0 0 16 16" className="ml-[34px] mt-[2px] shrink-0"><circle cx="8" cy="8" r="7" fill="none" stroke="#999" strokeWidth="1.300" /><path d="M4 8h8M8 4v8" stroke="#777" strokeWidth="1.600" /></svg>
      <div className="ml-[60px] mt-[3px] flex shrink-0 flex-col gap-[2px]">
        <span className="h-[2px] w-[2px] bg-[#b0b0b0]" /><span className="h-[2px] w-[2px] bg-[#b0b0b0]" /><span className="h-[2px] w-[2px] bg-[#b0b0b0]" />
      </div>
      <div className="ml-[14px] mt-[3px] flex h-[15px] w-[368px] shrink-0">
        <div className="flex w-[14px] items-center justify-center border border-[#ababab] bg-white"><svg width="4" height="7" viewBox="0 0 4 7"><path d="M4 0v7L0 3.500z" fill="#666" /></svg></div>
        <div className="w-[321px] border border-l-2 border-[#ababab] bg-white" />
        <div className="w-[17px] bg-[#d6d6d6]" />
        <div className="ml-[2px] flex w-[14px] items-center justify-center border border-[#ababab] bg-white"><svg width="4" height="7" viewBox="0 0 4 7"><path d="M0 0v7l4-3.500z" fill="#666" /></svg></div>
      </div>
    </div>
  );
}

function StatusBar() {
  return (
    <div className="flex h-[21px] items-center border-t border-[#c6c6c6] bg-[#f0f0f0] text-[12px] text-[#555]">
      <span className="mb-[2px] ml-[7px]">Ready</span>
      <div className="ml-auto flex h-full items-center pr-[19px]">
        <div className="flex h-full w-[38px] items-center justify-center bg-[#c6c6c6]">
          <svg width="13" height="13" viewBox="0 0 13 13"><path d="M.5.500h12v12H.5zM4.500.5v12M8.500.5v12M.5 4.500h12M.5 8.500h12" fill="none" stroke="#666" /></svg>
        </div>
        <div className="flex h-full w-[38px] items-center justify-center">
          <svg width="14" height="13" viewBox="0 0 14 13"><path d="M.5.500h13v12H.5zM3.500 3.500h7v6h-7zM5 5.500h4M5 7.500h4" fill="none" stroke="#666" /></svg>
        </div>
        <div className="flex h-full w-[38px] items-center justify-center">
          <svg width="14" height="13" viewBox="0 0 14 13"><path d="M.5.500h13v12H.5zM.5 8.500h5v-8M5.500 5.500h3v-5M8.500 8.500" fill="none" stroke="#666" /></svg>
        </div>
        <span className="ml-[5px] h-[2px] w-[6px] bg-[#666]" />
        <div className="relative ml-[4px] h-px w-[100px] bg-[#aaa]">
          <span className="absolute left-[48px] top-[-5px] h-[11px] w-[4px] bg-[#666]" />
        </div>
        <span className="relative ml-[4px] h-[2px] w-[6px] bg-[#666]"><span className="absolute left-[2px] top-[-2px] h-[6px] w-[2px] bg-[#666]" /></span>
        <span className="mb-[2px] ml-[10px] text-[11.5px]">100%</span>
      </div>
    </div>
  );
}

export default function App() {
  return (
    <div className="h-[940px] w-[1635px] overflow-hidden border-b-2 border-l border-r border-[#217346] font-['Noto_Sans',sans-serif] tracking-[-0.3px]">
      <div className="relative bg-[#217346]">
        <Pattern />
        <TitleBar />
        <TabsBar />
      </div>
      <Ribbon />
      <FormulaBar />
      <Sheet />
      <SheetTabs />
      <StatusBar />
    </div>
  );
}
